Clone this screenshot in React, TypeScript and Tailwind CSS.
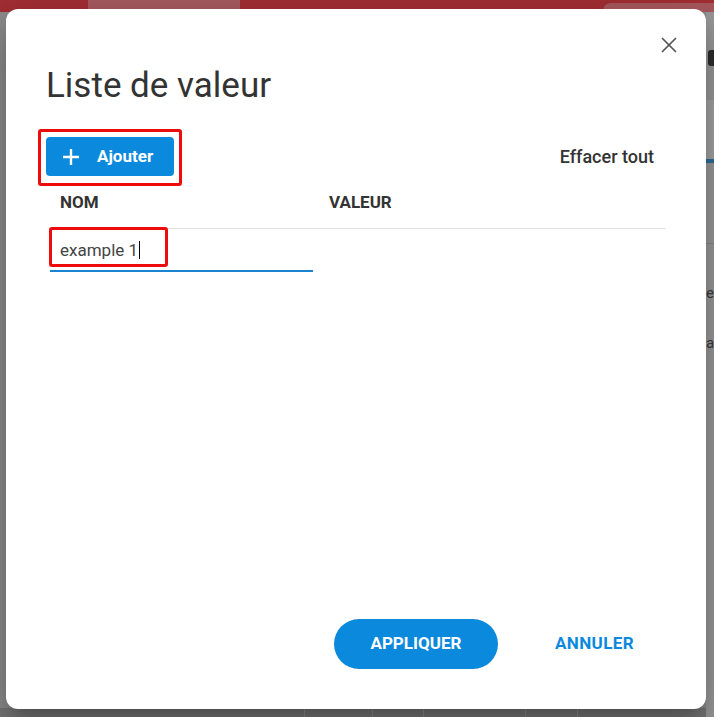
import { X } from "lucide-react";

function PlusIcon() {
  return (
    <svg width="18" height="18" viewBox="0 0 18 18" fill="none">
      <path d="M9 1v16M1 9h16" stroke="white" strokeWidth="2.4" />
    </svg>
  );
}

// page behind the dialog, dimmed by the backdrop
function Backdrop() {
  return (
    <div className="flex h-full flex-col bg-[#8c8c8c]">
      <div className="flex h-[12px]">
        <div className="w-[88px] bg-[#a32e34]" />
        <div className="w-[152px] bg-[#a75b60]" />
        <div className="w-[363px] bg-[#a32e34]" />
        <div className="flex flex-1 flex-col bg-[#a32e34]">
          <div className="mt-[3px] flex-1 rounded-tl-[8px] bg-[#a8585d]" />
        </div>
      </div>
      <div className="flex flex-1">
        <div className="flex w-[706px] flex-col">
          <div className="flex-1" />
          <div className="flex h-[9px] bg-[#777]">
            <div className="w-[304px]" />
            <div className="w-[68px] border-l border-[#8a8a8a]" />
            <div className="w-[51px] border-l border-[#8a8a8a]" />
            <div className="w-[102px] border-l border-[#8a8a8a]" />
            <div className="w-[52px] border-l border-[#8a8a8a]" />
            <div className="flex-1 border-l border-[#8a8a8a]" />
          </div>
        </div>
        <div className="flex w-[8px] flex-col bg-[#999] text-[15px] leading-none text-[#3a3a3a]">
          <div className="h-[38px]" />
          <div className="ml-[2px] h-[16px] rounded-l-[3px] bg-[#2e2e2e]" />
          <div className="h-[34px]" />
          <div className="h-[59px] bg-[#a3a3a3]" />
          <div className="h-[4px] bg-[#2d6f9c]" />
          <div className="h-[80px]" />
          <div className="h-px bg-[#888]" />
          <div className="h-[42px]" />
          <div className="overflow-hidden">e</div>
          <div className="h-[35px]" />
          <div className="overflow-hidden">a</div>
        </div>
      </div>
    </div>
  );
}

export default function App() {
  return (
    <div className="relative h-[717px] w-[714px] overflow-hidden" style={{ fontFamily: "Roboto, 'Liberation Sans', sans-serif" }}>
      <Backdrop />

      <div className="absolute left-[6px] top-[9px] flex h-[700px] w-[700px] flex-col rounded-[12px] bg-white shadow-[0_11px_15px_-7px_rgba(0,0,0,0.2),0_24px_38px_3px_rgba(0,0,0,0.14),0_9px_46px_8px_rgba(0,0,0,0.12)]">
        {/* close */}
        <div className="flex justify-end pr-[24px] pt-[23px]">
          <X size={26} strokeWidth={1.6} className="text-[#555]" />
        </div>

        <h1 className="mt-[8px] pl-[40px] text-[35px] font-normal leading-[40px] text-[#333]">Liste de valeur</h1>

        {/* toolbar */}
        <div className="mt-[31px] flex h-[39px] items-center justify-between pl-[40px] pr-[52px]">
          <button className="flex h-[39px] w-[128px] items-center rounded-[4px] bg-[#0b89dd] pl-[16px]">
            <PlusIcon />
            <span className="ml-[17px] text-[17px] font-bold text-white">Ajouter</span>
          </button>
          <span className="text-[18px] font-medium text-[#333]">Effacer tout</span>
        </div>

        {/* table */}
        <div className="ml-[44px] mt-[16px] w-[616px]">
          <div className="flex border-b border-[#e3e3e3] pb-[16px] text-[17px] font-bold leading-[20px] text-[#333]">
            <div className="w-[269px] pl-[10px]">NOM</div>
            <div className="pl-[10px]">VALEUR</div>
          </div>
          <div className="flex">
            <div className="w-[263px] border-b-2 border-[#1a84d2] pb-[8px] pl-[10px] pt-[9px] text-[17px] leading-[24px] text-[#444]">
              example 1
              <span className="ml-px inline-block h-[18px] w-px bg-black align-[-3px]" />
            </div>
          </div>
        </div>

        {/* footer */}
        <div className="mt-auto flex items-center justify-end gap-[33px] pb-[40px] pr-[48px]">
          <button className="h-[50px] w-[164px] rounded-full bg-[#0b89dd] text-[17px] font-bold text-white">APPLIQUER</button>
          <button className="h-[50px] px-[24px] text-[17px] font-bold tracking-[0.4px] text-[#0b89dd]">ANNULER</button>
        </div>

        {/* highlight annotations */}
        <div className="absolute left-[32px] top-[120px] h-[57px] w-[144px] rounded-[3px] border-[3px] border-[#ec0c0c]" />
        <div className="absolute left-[43px] top-[218px] h-[40px] w-[119px] rounded-[3px] border-[3px] border-[#ec0c0c]" />
      </div>
    </div>
  );
}
